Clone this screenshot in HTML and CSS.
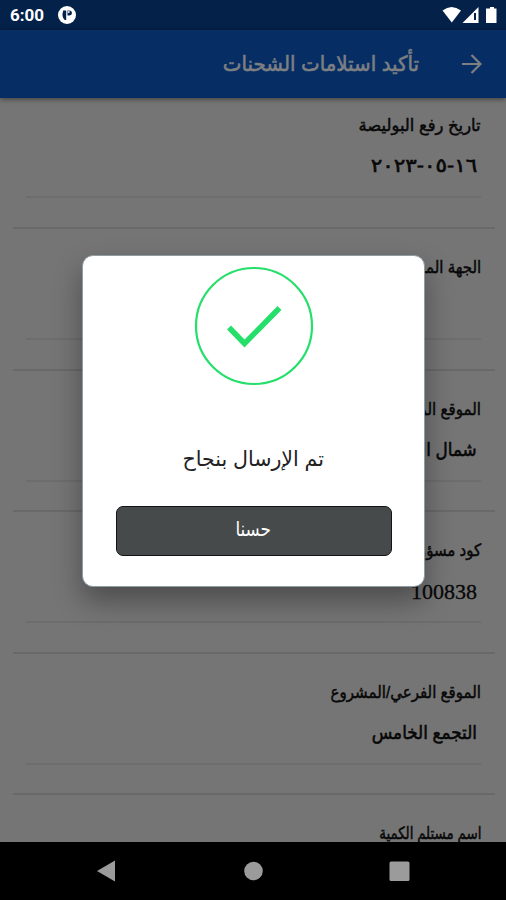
FILE: index.html
```html
<!DOCTYPE html>
<html lang="ar" dir="rtl">

<head>
  <meta charset="UTF-8">
  <meta name="viewport" content="width=device-width, initial-scale=1.0">
  <title>تأكيد استلامات الشحنات</title>
  <link rel="stylesheet" href="styles.css">
</head>

<body>
  <div class="screen">
    <div class="status" dir="ltr">
      <span class="time">6:00</span>
      <svg class="p-icon" width="18" height="18" viewBox="0 0 18 18">
        <circle cx="9" cy="9" r="9" fill="#fff"/>
        <path d="M5.200 4.500h3v9.500h-1.500q-3.500-3-1.500-9.500z" fill="#04214a"/>
        <path d="M9.500 4.500h2a2.500 2.500 0 0 1 0 5h-2z" fill="#04214a"/>
        <circle cx="10.800" cy="6" r="0.900" fill="#fff"/>
      </svg>
      <svg class="signals" width="58" height="18" viewBox="0 0 58 18">
        <path d="M1.500 4.500Q10.500 -2.500 20 4.500L10.800 16.500z" fill="#fff"/>
        <path d="M37.500 1v16h-16z" fill="#fff"/>
        <path d="M34 7v7" stroke="#04214a" stroke-width="2"/>
        <path d="M49 1h4v1.500h2.500v14.500h-10.500v-14.500h4z" fill="#fff"/>
      </svg>
    </div>

    <div class="appbar">
      <svg width="20" height="20" viewBox="0 0 20 20">
        <path d="M0 10h18M9.500 1l9 9l-9 9" fill="none" stroke="#7d7f83" stroke-width="2.200"/>
      </svg>
      <h1><span>تأكيد استلامات الشحنات</span></h1>
    </div>

    <div class="list">
      <div class="item">
        <div class="label wide"><span>تاريخ رفع البوليصة</span></div>
        <div class="value date"><span>١٦-٠٥-٢٠٢٣</span></div>
      </div>
      <div class="item">
        <div class="label"><span>الجهة المستلمة</span></div>
        <div class="value"></div>
      </div>
      <div class="item">
        <div class="label"><span>الموقع الرئيسي</span></div>
        <div class="value"><span>شمال القاهرة</span></div>
      </div>
      <div class="item">
        <div class="label"><span>كود مسؤول الموقع</span></div>
        <div class="value number"><span>100838</span></div>
      </div>
      <div class="item">
        <div class="label"><span>الموقع الفرعي/المشروع</span></div>
        <div class="value"><span>التجمع الخامس</span></div>
      </div>
      <div class="item">
        <div class="label narrow"><span>اسم مستلم الكمية</span></div>
        <div class="value"></div>
      </div>
    </div>

    <div class="nav" dir="ltr">
      <svg width="506" height="58" viewBox="0 0 506 58">
        <path d="M97 29l18-10.500v21z" fill="#9b9b9b"/>
        <circle cx="253.500" cy="29" r="9.300" fill="#9b9b9b"/>
        <rect x="389.500" y="19.500" width="20" height="19.500" rx="1.500" fill="#9b9b9b"/>
      </svg>
    </div>

    <div class="overlay">
      <div class="dialog">
        <svg class="check" width="120" height="120" viewBox="0 0 120 120">
          <circle cx="60" cy="60" r="58" fill="none" stroke="#25df6b" stroke-width="2.200"/>
          <path d="M35 61.500l15.500 16l35-35.500" fill="none" stroke="#25df6b" stroke-width="5.500"/>
        </svg>
        <p class="message"><span>تم الإرسال بنجاح</span></p>
        <button class="ok"><span>حسنا</span></button>
      </div>
    </div>
  </div>
</body>

</html>
```
FILE: styles.css
```css
* {
  box-sizing: border-box;
}

body {
  margin: 0;
  background: #000;
  font-family: "Liberation Sans", "DejaVu Sans", sans-serif;
}

span {
  display: inline-block;
}

.screen {
  position: relative;
  display: flex;
  flex-direction: column;
  width: 506px;
  height: 900px;
  overflow: hidden;
}

.status {
  display: flex;
  align-items: center;
  height: 30px;
  padding: 0 7px 0 10px;
  background: #04214a;
}

.time {
  width: 48px;
  color: #fff;
  font: bold 17px Roboto, sans-serif;
}

.signals {
  margin-left: auto;
}

.appbar {
  display: flex;
  align-items: center;
  gap: 43px;
  height: 68px;
  padding: 0 24px;
  background: #062e65;
  box-shadow: 0 1px 5px rgba(0, 0, 0, 0.5);
  z-index: 1;
}

.appbar h1 {
  margin: 0;
  color: #7d7f83;
  font-size: 21px;
  font-weight: normal;
  line-height: 28px;
  -webkit-text-stroke: 0.6px #7d7f83;
}

.appbar h1 span {
  transform: scaleX(0.943);
  transform-origin: right;
}

.list {
  flex: 1;
  min-height: 0;
  overflow: hidden;
  background: #757575;
  color: #080808;
}

.item {
  height: 141.5px;
  margin: 0 11px 0 13px;
  padding: 27px 14px 0 13px;
  border-bottom: 2px solid #696969;
}

.item:first-child {
  height: 131px;
  padding-top: 16px;
}

.label {
  height: 24px;
  font-size: 17px;
  line-height: 24px;
  white-space: nowrap;
  -webkit-text-stroke: 0.5px #080808;
}

.label span,
.value span {
  transform: scaleX(0.885);
  transform-origin: right;
}

.label.wide span {
  transform: scaleX(0.965);
}

.label.narrow span {
  transform: scaleX(0.79);
}

.value {
  height: 60px;
  padding: 12px 4px 0;
  border-bottom: 2px solid #6d6d6d;
  font-size: 19px;
  line-height: 32px;
  white-space: nowrap;
  -webkit-text-stroke: 0.6px #080808;
}

.date span {
  transform: scaleX(1.13);
}

.number {
  font: 22px/34px "Liberation Serif", serif;
  -webkit-text-stroke: 0.3px #080808;
}

.number span {
  transform: none;
}

.nav {
  height: 58px;
  background: #000;
}

.overlay {
  position: absolute;
  inset: 0 0 58px;
  z-index: 2;
  display: flex;
  align-items: center;
  justify-content: center;
  padding-left: 1px;
}

.dialog {
  display: flex;
  flex-direction: column;
  align-items: center;
  width: 343px;
  height: 332px;
  padding-top: 10px;
  background: #fff;
  border: 1px solid #8f9ca3;
  border-radius: 11px;
  box-shadow: 0 14px 28px rgba(0, 0, 0, 0.35);
}

.message {
  margin: 56px 0 0;
  color: #222;
  font-size: 21px;
  line-height: 34px;
}

.message span {
  transform: scaleX(0.98);
}

.ok {
  width: 276px;
  height: 50px;
  margin-top: 30px;
  padding: 0 0 4px;
  background: #474a4b;
  border: 1.5px solid #121416;
  border-radius: 7px;
  color: #fff;
  font: 20px "Liberation Sans", "DejaVu Sans", sans-serif;
}

.ok span {
  transform: scaleX(0.84);
}
```
